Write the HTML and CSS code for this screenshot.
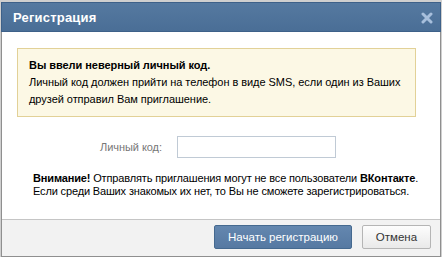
FILE: index.html
```html
<!DOCTYPE html>
<html lang="ru">
<head>
  <meta charset="UTF-8" />
  <title>Регистрация</title>
  <link rel="stylesheet" href="styles.css">
</head>
<body>
  <div class="popup">
    <div class="popup-title">
      <span>Регистрация</span>
      <svg class="close" width="12" height="12" viewBox="0 0 12 12">
        <path d="M2 2 L10 10 M10 2 L2 10" stroke="#a7bfdc" stroke-width="3" stroke-linecap="round" />
      </svg>
    </div>

    <div class="popup-body">
      <div class="warn">
        <b>Вы ввели неверный личный код.</b><br>
        Личный код должен прийти на телефон в виде SMS, если один из Ваших<br>
        друзей отправил Вам приглашение.
      </div>

      <div class="code-row">
        <label for="code">Личный код:</label>
        <input type="text" id="code" />
      </div>

      <div class="note">
        <b>Внимание!</b> Отправлять приглашения могут не все пользователи <b>ВКонтакте</b>.<br>
        Если среди Ваших знакомых их нет, то Вы не сможете зарегистрироваться.
      </div>
    </div>

    <div class="popup-foot">
      <button class="btn btn-blue">Начать регистрацию</button>
      <button class="btn btn-gray">Отмена</button>
    </div>
  </div>
</body>
</html>
```

FILE: styles.css
```css
body {
  margin: 0;
  background: #cfcfcf;
  font-family: 'Liberation Sans', Arial, sans-serif;
  font-size: 11px;
  letter-spacing: -0.05px;
  color: #000;
}
.popup {
  width: 438px;
  margin: 2px 0 0 1px;
  background: #fff;
  border: 1px solid #8f8f8f;
  border-top: none;
}
.popup-title {
  height: 28px;
  display: flex;
  align-items: center;
  justify-content: space-between;
  padding: 0 7px 0 11px;
  background: linear-gradient(#5579a0, #4a6e96);
  border: 1px solid #3e6189;
  margin: 0 -1px;
  color: #fff;
  font-weight: bold;
  font-size: 13px;
  letter-spacing: 0.2px;
}
.close {
  margin-top: 1px;
}
.popup-body {
  padding: 16px 24px 21px 15px;
  white-space: nowrap;
}
.warn {
  background: #fcf8e5;
  border: 1px solid #e2d197;
  padding: 8px 11px 8px;
  line-height: 17px;
}
.code-row {
  display: flex;
  align-items: center;
  margin-top: 19px;
}
.code-row label {
  width: 145px;
  text-align: right;
  color: #777;
  padding-right: 15px;
}
.code-row input {
  width: 153px;
  height: 18px;
  border: 1px solid #c0cad5;
  padding: 1px 2px;
}
.note {
  margin-top: 14px;
  padding-left: 16px;
  line-height: 13px;
  letter-spacing: -0.15px;
}
.popup-foot {
  display: flex;
  justify-content: flex-end;
  gap: 10px;
  padding: 5px 9px 7px;
  background: #f2f2f2;
  border-top: 1px solid #c5c5c5;
}
.btn {
  height: 24px;
  font-family: 'Liberation Sans', Arial, sans-serif;
  font-size: 11.5px;
  border-radius: 2px;
  padding: 0 8px;
}
.btn-blue {
  width: 138px;
  background: linear-gradient(#6487af, #5679a2);
  border: 1px solid #45698f;
  color: #fff;
}
.btn-gray {
  width: 69px;
  background: linear-gradient(#fdfdfd, #e9e9e9);
  border: 1px solid #b5b5b5;
  color: #333;
}
```
